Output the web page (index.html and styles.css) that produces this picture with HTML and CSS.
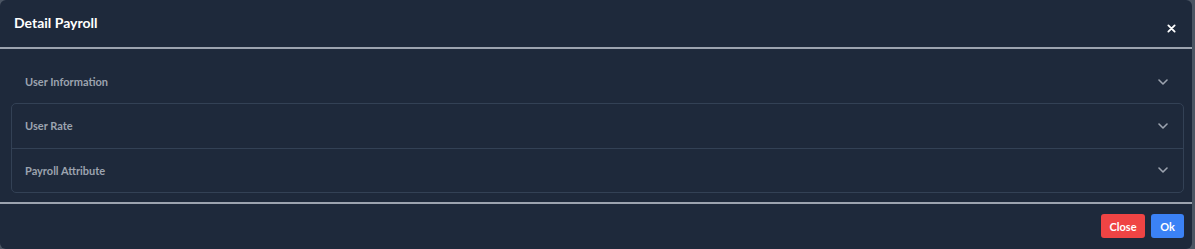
FILE: index.html
```html
<!DOCTYPE html>
<html>
<head>
<meta charset="utf-8">
<link rel="stylesheet" href="styles.css">
</head>
<body>
<div class="modal">
  <div class="modal-header">
    <h2 class="title">Detail Payroll</h2>
    <button class="close-x" aria-label="Close">
      <svg width="9" height="9" viewBox="0 0 10 10"><path d="M1.5 1.5 L8.5 8.5 M8.5 1.5 L1.5 8.5" stroke="#ffffff" stroke-width="2" stroke-linecap="round"/></svg>
    </button>
  </div>
  <div class="modal-body">
    <div class="acc-row first">
      <span class="acc-label">User Information</span>
      <svg class="chev" width="10" height="6" viewBox="0 0 10 6"><path d="M1 1 L5 5 L9 1" fill="none" stroke="#9ca3af" stroke-width="1.6" stroke-linecap="round" stroke-linejoin="round"/></svg>
    </div>
    <div class="acc-box">
      <div class="acc-row">
        <span class="acc-label">User Rate</span>
        <svg class="chev" width="10" height="6" viewBox="0 0 10 6"><path d="M1 1 L5 5 L9 1" fill="none" stroke="#9ca3af" stroke-width="1.6" stroke-linecap="round" stroke-linejoin="round"/></svg>
      </div>
      <div class="acc-row divider">
        <span class="acc-label">Payroll Attribute</span>
        <svg class="chev" width="10" height="6" viewBox="0 0 10 6"><path d="M1 1 L5 5 L9 1" fill="none" stroke="#9ca3af" stroke-width="1.6" stroke-linecap="round" stroke-linejoin="round"/></svg>
      </div>
    </div>
  </div>
  <div class="modal-footer">
    <button class="btn btn-red">Close</button>
    <button class="btn btn-blue">Ok</button>
  </div>
</div>
</body>
</html>
```
FILE: styles.css
```css
html, body {
  margin: 0;
  padding: 0;
  background: #4b5563;
}
body {
  font-family: "Lato", "Open Sans", sans-serif;
  width: 1195px;
  height: 249px;
  overflow: hidden;
}
.modal {
  width: 1192px;
  height: 249px;
  background: #1e293b;
  border-radius: 6px;
  box-sizing: border-box;
  display: flex;
  flex-direction: column;
}
.modal-header {
  flex-shrink: 0;
  height: 47px;
  display: flex;
  align-items: flex-start;
  justify-content: space-between;
  padding: 0 16px 0 14px;
  border-bottom: 2px solid #9ca3af;
}
.title {
  margin: 14px 0 0 0;
  font-size: 14px;
  font-weight: 700;
  color: #ffffff;
  line-height: 18px;
}
.close-x {
  background: none;
  border: none;
  padding: 0;
  margin-top: 24px;
  width: 9px;
  height: 9px;
  display: flex;
  cursor: pointer;
}
.modal-body {
  flex-shrink: 0;
  padding: 11px 8px 9px 11px;
  display: flex;
  flex-direction: column;
}
.acc-row {
  flex-shrink: 0;
  height: 44px;
  display: flex;
  align-items: center;
  justify-content: space-between;
  padding: 0 15px 1px 13px;
  box-sizing: border-box;
}
.acc-row.first {
  height: 43px;
  padding: 0 16px 0 14px;
}
.acc-box {
  flex-shrink: 0;
  border: 1px solid #334155;
  border-radius: 5px;
}
.acc-row.divider {
  border-top: 1px solid #334155;
}
.acc-label {
  font-size: 11px;
  font-weight: 700;
  color: #9ca3af;
}
.chev {
  display: block;
}
.modal-footer {
  border-top: 2px solid #9ca3af;
  flex: 1;
  display: flex;
  justify-content: flex-end;
  align-items: flex-start;
  gap: 6px;
  padding: 10px 8px 0 0;
}
.btn {
  height: 24px;
  border: none;
  border-radius: 3px;
  color: #ffffff;
  font-family: "Lato", "Open Sans", sans-serif;
  font-size: 11px;
  font-weight: 700;
  padding: 0;
  cursor: pointer;
}
.btn-red {
  width: 44px;
  background: #ef4444;
}
.btn-blue {
  width: 33px;
  background: #3b82f6;
}
```
